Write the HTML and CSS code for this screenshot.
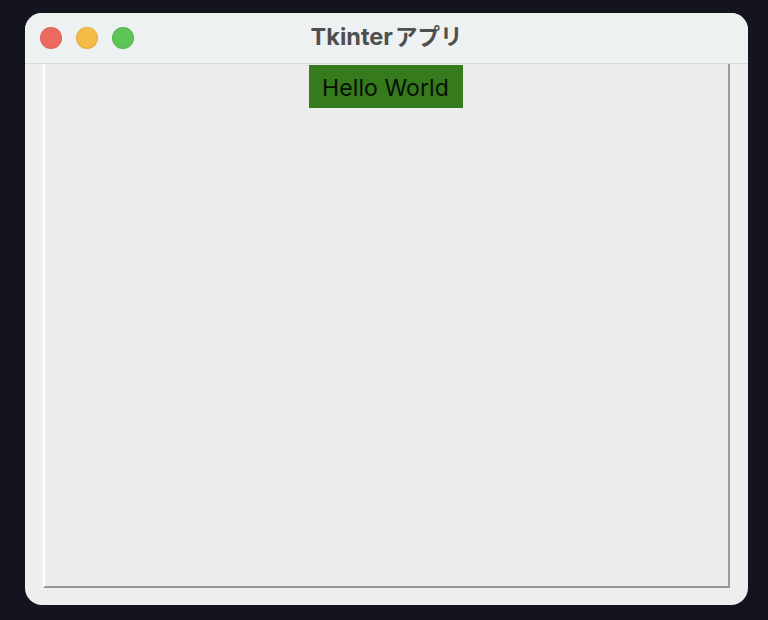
FILE: index.html
```html
<!DOCTYPE html>
<html lang="ja">
<head>
<meta charset="utf-8">
<title>Tkinter アプリ</title>
<link rel="stylesheet" href="styles.css">
</head>
<body>
<div class="window">
  <header class="titlebar">
    <div class="lights">
      <span class="light red"></span>
      <span class="light yellow"></span>
      <span class="light green"></span>
    </div>
    <h1 class="title">Tkinter<span class="title-jp">アプリ</span></h1>
  </header>
  <main class="content">
    <div class="frame">
      <div class="hello">Hello World</div>
    </div>
  </main>
</div>
</body>
</html>
```
FILE: styles.css
```css
* { box-sizing: border-box; }
html, body { margin: 0; height: 100%; }
body {
  width: 768px;
  height: 620px;
  overflow: hidden;
  padding: 13px 20px 15px 25px;
  background: #14141f;
  font-family: "Liberation Sans", Arial, sans-serif;
}
.window {
  height: 592px;
  display: flex;
  flex-direction: column;
  border-radius: 17px;
  overflow: hidden;
  background: #eeeeee;
}
.titlebar {
  position: relative;
  flex: none;
  height: 51px;
  display: flex;
  align-items: center;
  justify-content: center;
  background: #eef1f2;
  border-bottom: 1px solid #d9dbdb;
}
.lights {
  position: absolute;
  left: 15px;
  top: 14px;
  display: flex;
  gap: 14px;
}
.light {
  width: 22px;
  height: 22px;
  border-radius: 50%;
  border: 1px solid rgba(0, 0, 0, 0.07);
}
.red { background: #ee6a60; }
.yellow { background: #f6bb47; }
.green { background: #5ec455; }
.title {
  margin: 0 0 5px;
  font-family: Inter, "Noto Sans CJK JP", sans-serif;
  font-size: 23.5px;
  font-weight: 700;
  line-height: 28px;
  color: #4f4f4f;
}
.title-jp {
  margin-left: 2px;
  font-family: "Noto Sans CJK JP", sans-serif;
  font-size: 22.5px;
}
.content {
  flex: 1;
  padding: 0 18px 17px;
}
.frame {
  height: 100%;
  display: flex;
  flex-direction: column;
  align-items: center;
  padding: 1px 2px 0 0;
  background: #ececec;
  border-left: 2px solid #ffffff;
  border-right: 2px solid #9b9b9b;
  border-bottom: 2px solid #979797;
}
.hello {
  width: 154px;
  height: 43px;
  display: flex;
  align-items: center;
  justify-content: center;
  padding-top: 2px;
  background: #367a1e;
  color: #061003;
  font-family: Inter, "Liberation Sans", sans-serif;
  font-size: 23px;
  letter-spacing: 0.1px;
}
```
